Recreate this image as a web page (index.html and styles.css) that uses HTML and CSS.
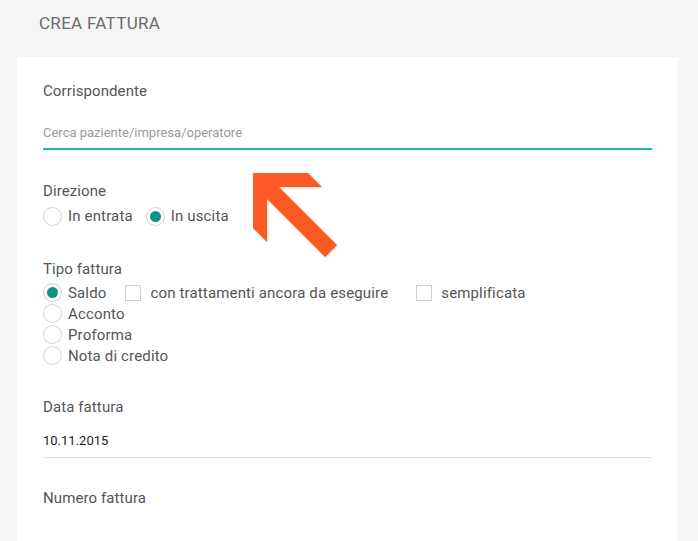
FILE: index.html
```html
<!DOCTYPE html>
<html lang="it">
<head>
<meta charset="utf-8">
<title>Crea fattura</title>
<link rel="stylesheet" href="styles.css">
</head>
<body>
<div class="page">
  <h1 class="title">CREA FATTURA</h1>
  <div class="card">
    <div class="label">Corrispondente</div>
    <div class="input input-active"><span class="placeholder">Cerca paziente/impresa/operatore</span></div>

    <div class="label label-dir">Direzione</div>
    <div class="row row-dir">
      <span class="opt"><span class="radio"></span><span class="opt-text">In entrata</span></span>
      <span class="opt opt-gap"><span class="radio checked"></span><span class="opt-text">In uscita</span></span>
    </div>

    <div class="label label-tipo">Tipo fattura</div>
    <div class="list">
      <div class="row row-list">
        <span class="opt"><span class="radio checked"></span><span class="opt-text">Saldo</span></span>
        <span class="opt opt-cb1"><span class="check"></span><span class="opt-text cb-text">con trattamenti ancora da eseguire</span></span>
        <span class="opt opt-cb2"><span class="check"></span><span class="opt-text cb-text">semplificata</span></span>
      </div>
      <div class="row row-list"><span class="opt"><span class="radio"></span><span class="opt-text">Acconto</span></span></div>
      <div class="row row-list"><span class="opt"><span class="radio"></span><span class="opt-text">Proforma</span></span></div>
      <div class="row row-list"><span class="opt"><span class="radio"></span><span class="opt-text">Nota di credito</span></span></div>
    </div>

    <div class="label label-data">Data fattura</div>
    <div class="input input-plain"><span class="value">10.11.2015</span></div>

    <div class="label label-num">Numero fattura</div>

    <svg class="arrow" width="110" height="100" viewBox="0 0 110 100" aria-hidden="true">
      <polygon points="4,4 59,4 73,18 30,18 88,76 76,88 18,30 18,73 4,59" fill="#fb5a25"/>
    </svg>
  </div>
</div>
</body>
</html>
```
FILE: styles.css
```css
* { box-sizing: border-box; }
html, body { margin: 0; padding: 0; }
body {
  background: #f6f6f6;
  font-family: Roboto, "Liberation Sans", Arial, sans-serif;
  color: #555;
  width: 698px;
  height: 541px;
  overflow: hidden;
}
.page { padding-top: 13px; }
.title {
  margin: 0 0 24px 39px;
  font-size: 17px;
  line-height: 20px;
  font-weight: 400;
  letter-spacing: 0.3px;
  color: #6b6b6b;
}
.card {
  position: relative;
  margin-left: 17px;
  width: 660px;
  height: 500px;
  background: #fff;
  box-shadow: 0 0 1px rgba(0,0,0,0.06);
  padding: 25px 25px 0 26px;
}
.label {
  font-size: 15px;
  line-height: 18px;
  letter-spacing: 0.1px;
  color: #555;
}
.input {
  margin-top: 25px;
  line-height: 16px;
  font-size: 13px;
}
.input-active {
  padding-bottom: 7px;
  border-bottom: 2px solid #1fb2cb;
}
.placeholder { color: #9a9a9a; }
.label-dir { margin-top: 32px; }
.row { display: flex; align-items: center; }
.row-dir { margin-top: 7px; height: 18px; }
.opt { display: inline-flex; align-items: center; }
.opt-gap { margin-left: 13px; }
.opt-text {
  font-size: 15px;
  line-height: 18px;
  letter-spacing: 0.15px;
  color: #555;
  margin-left: 6px;
}
.radio {
  width: 19px;
  height: 19px;
  border: 1px solid #d4d4d4;
  border-radius: 50%;
  background: #fff;
  display: inline-flex;
  align-items: center;
  justify-content: center;
  flex: none;
}
.radio.checked::after {
  content: "";
  width: 11px;
  height: 11px;
  border-radius: 50%;
  background: #0e9384;
}
.check {
  width: 16px;
  height: 16px;
  border: 1px solid #cfcfcf;
  background: #fff;
  flex: none;
}
.cb-text { margin-left: 9px; }
.opt-cb1 { margin-left: 19px; }
.opt-cb2 { margin-left: 28px; }
.label-tipo { margin-top: 35px; }
.list { margin-top: 4px; }
.row-list { height: 21px; }
.label-data { margin-top: 32px; }
.input-plain {
  margin-top: 17px;
  padding-bottom: 8px;
  border-bottom: 1px solid #e2e2e2;
}
.value { color: #222; }
.label-num { margin-top: 31px; }
.arrow {
  position: absolute;
  left: 232px;
  top: 112px;
  filter: drop-shadow(1px 1px 1px rgba(0,0,0,0.15));
}
```
